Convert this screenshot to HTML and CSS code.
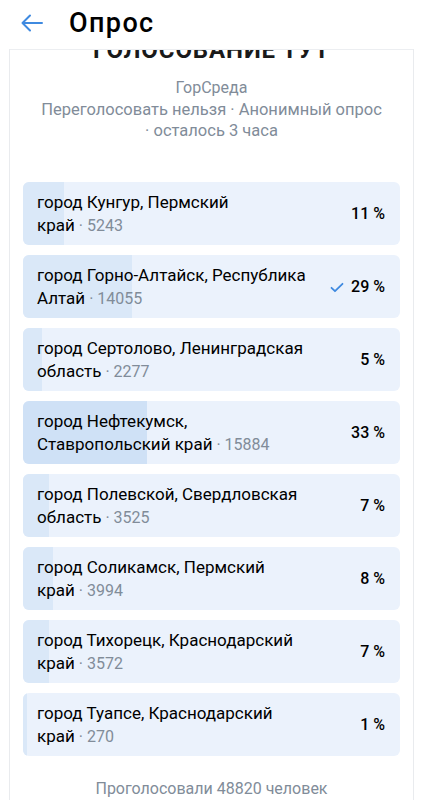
FILE: index.html
```html
<!DOCTYPE html>
<html lang="ru">
<head>
<meta charset="utf-8">
<title>Опрос</title>
<link rel="stylesheet" href="styles.css">
</head>
<body>
<header class="header">
  <svg class="back" width="22" height="18" viewBox="0 0 22 18" fill="none" stroke="#3f8ae0" stroke-width="2" stroke-linecap="round" stroke-linejoin="round">
    <path d="M21 9H1.5M9 1.5L1.5 9L9 16.5"/>
  </svg>
  <h1 class="header-title">Опрос</h1>
</header>
<main class="page">
  <section class="card">
    <h2 class="poll-title">Голосование тут</h2>
    <div class="poll-author">ГорСреда</div>
    <div class="poll-meta">Переголосовать нельзя · Анонимный опрос<br>· осталось 3 часа</div>
    <div class="options">
      <div class="option">
        <div class="fill" style="width:11%"></div>
        <div class="opt-text">город Кунгур, Пермский край<span class="count">&nbsp;·&nbsp;5243</span></div>
        <div class="opt-right"><span class="pct">11 %</span></div>
      </div>
      <div class="option">
        <div class="fill" style="width:29%"></div>
        <div class="opt-text">город Горно-Алтайск, Республика Алтай<span class="count">&nbsp;·&nbsp;14055</span></div>
        <div class="opt-right">
          <svg class="check" width="14" height="11" viewBox="0 0 14 11" fill="none" stroke="#3f8ae0" stroke-width="1.8" stroke-linecap="round" stroke-linejoin="round"><path d="M1.5 5.8L5 9.2L12.5 1.8"/></svg>
          <span class="pct">29 %</span>
        </div>
      </div>
      <div class="option">
        <div class="fill" style="width:5%"></div>
        <div class="opt-text">город Сертолово, Ленинградская область<span class="count">&nbsp;·&nbsp;2277</span></div>
        <div class="opt-right"><span class="pct">5 %</span></div>
      </div>
      <div class="option">
        <div class="fill lead" style="width:33%"></div>
        <div class="opt-text">город Нефтекумск, Ставропольский край<span class="count">&nbsp;·&nbsp;15884</span></div>
        <div class="opt-right"><span class="pct">33 %</span></div>
      </div>
      <div class="option">
        <div class="fill" style="width:7%"></div>
        <div class="opt-text">город Полевской, Свердловская область<span class="count">&nbsp;·&nbsp;3525</span></div>
        <div class="opt-right"><span class="pct">7 %</span></div>
      </div>
      <div class="option">
        <div class="fill" style="width:8%"></div>
        <div class="opt-text">город Соликамск, Пермский край<span class="count">&nbsp;·&nbsp;3994</span></div>
        <div class="opt-right"><span class="pct">8 %</span></div>
      </div>
      <div class="option">
        <div class="fill" style="width:7%"></div>
        <div class="opt-text">город Тихорецк, Краснодарский край<span class="count">&nbsp;·&nbsp;3572</span></div>
        <div class="opt-right"><span class="pct">7 %</span></div>
      </div>
      <div class="option">
        <div class="fill" style="width:1%"></div>
        <div class="opt-text">город Туапсе, Краснодарский край<span class="count">&nbsp;·&nbsp;270</span></div>
        <div class="opt-right"><span class="pct">1 %</span></div>
      </div>
    </div>
    <div class="voted">Проголосовали 48820 человек</div>
  </section>
</main>
</body>
</html>
```

FILE: styles.css
```css
* { box-sizing: border-box; }

html, body {
  margin: 0;
  padding: 0;
  background: #ffffff;
}

body {
  font-family: Roboto, "Noto Sans", "Liberation Sans", sans-serif;
  color: #000000;
  -webkit-font-smoothing: antialiased;
}

.header {
  position: fixed;
  top: 0;
  left: 0;
  right: 0;
  height: 49px;
  background: #ffffff;
  display: flex;
  align-items: center;
  padding-left: 21px;
  z-index: 10;
}

.header::after {
  content: "";
  position: absolute;
  left: 10px;
  right: 10px;
  bottom: -1px;
  height: 1px;
  background: #eceef1;
}

.back {
  display: block;
  flex: none;
  margin-top: -3px;
}

.header-title {
  margin: -3px 0 0 26px;
  font-size: 27px;
  font-weight: 500;
  letter-spacing: 1.4px;
  line-height: 30px;
}

.page {
  padding-top: 17px;
}

.card {
  margin: 0 9px;
  border: 1px solid #e9ebee;
  border-bottom: none;
  border-radius: 8px 8px 0 0;
  padding: 17px 0 0;
  text-align: center;
}

.poll-title {
  margin: 0;
  font-size: 24px;
  font-weight: 700;
  line-height: 30px;
  text-transform: uppercase;
  letter-spacing: 0.9px;
  color: #1a1a1a;
}

.poll-author {
  margin-top: 12px;
  font-size: 16px;
  line-height: 21px;
  color: #818c99;
}

.poll-meta {
  margin-top: 1px;
  font-size: 16.5px;
  line-height: 21px;
  color: #818c99;
}

.options {
  margin-top: 41px;
  padding: 0 13px;
  display: flex;
  flex-direction: column;
  gap: 10px;
  text-align: left;
}

.option {
  position: relative;
  height: 63px;
  border-radius: 6px;
  background: #ebf2fc;
  overflow: hidden;
  display: flex;
  align-items: center;
  padding: 0 15px 0 14px;
}

.fill {
  position: absolute;
  left: 0;
  top: 0;
  bottom: 0;
  background: #dae8f8;
}

.fill.lead {
  background: #cfe1f6;
}

.opt-text {
  position: relative;
  width: 276px;
  font-size: 17px;
  line-height: 23px;
  color: #000000;
}

.count {
  font-size: 16px;
  color: #818c99;
}

.opt-right {
  position: relative;
  margin-left: auto;
  display: flex;
  align-items: center;
  gap: 7px;
}

.check {
  display: block;
  margin-top: 1px;
}

.pct {
  font-size: 16px;
  font-weight: 500;
  line-height: 20px;
  color: #000000;
}

.voted {
  margin-top: 22px;
  padding-bottom: 24px;
  font-size: 16px;
  line-height: 21px;
  color: #818c99;
}
```
